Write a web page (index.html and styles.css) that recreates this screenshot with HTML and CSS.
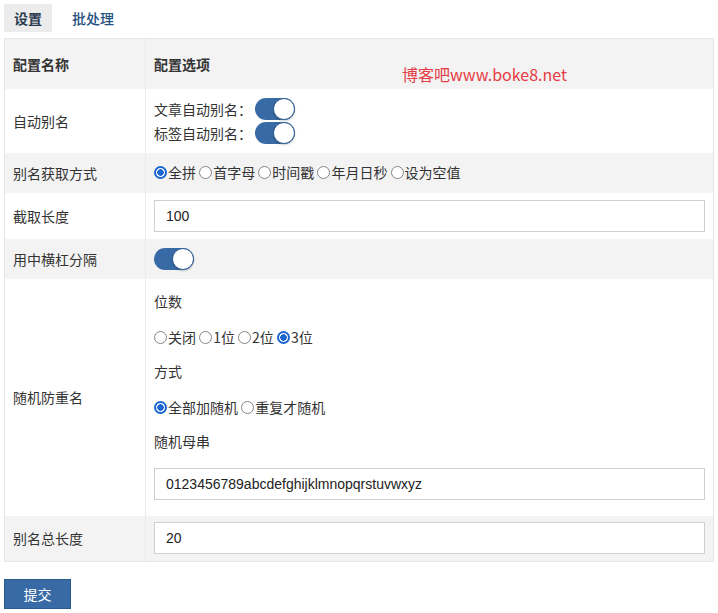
FILE: index.html
```html
<!DOCTYPE html>
<html lang="zh-CN">
<head>
<meta charset="utf-8">
<title>设置</title>
<link rel="stylesheet" href="styles.css">
</head>
<body>
<div class="page">
  <div class="tabs">
    <span class="tab active">设置</span>
    <span class="tab">批处理</span>
  </div>
  <div class="watermark">博客吧www.boke8.net</div>
  <table class="cfg">
    <tr class="head grey">
      <th class="c1">配置名称</th>
      <th class="c2">配置选项</th>
    </tr>
    <tr class="r-auto">
      <td class="c1">自动别名</td>
      <td class="c2">
        <div class="sw-line">文章自动别名：<span class="switch"><span class="knob"></span></span></div>
        <div class="sw-line">标签自动别名：<span class="switch"><span class="knob"></span></span></div>
      </td>
    </tr>
    <tr class="r40 grey">
      <td class="c1">别名获取方式</td>
      <td class="c2 radios">
        <label><span class="radio on"></span>全拼</label>
        <label><span class="radio"></span>首字母</label>
        <label><span class="radio"></span>时间戳</label>
        <label><span class="radio"></span>年月日秒</label>
        <label><span class="radio"></span>设为空值</label>
      </td>
    </tr>
    <tr class="r46">
      <td class="c1">截取长度</td>
      <td class="c2"><div class="input">100</div></td>
    </tr>
    <tr class="r40 grey">
      <td class="c1">用中横杠分隔</td>
      <td class="c2"><span class="switch"><span class="knob"></span></span></td>
    </tr>
    <tr class="r-rand">
      <td class="c1">随机防重名</td>
      <td class="c2 rand">
        <div class="sub">位数</div>
        <div class="sub radios">
          <label><span class="radio"></span>关闭</label>
          <label><span class="radio"></span>1位</label>
          <label><span class="radio"></span>2位</label>
          <label><span class="radio on"></span>3位</label>
        </div>
        <div class="sub">方式</div>
        <div class="sub radios">
          <label><span class="radio on"></span>全部加随机</label>
          <label><span class="radio"></span>重复才随机</label>
        </div>
        <div class="sub">随机母串</div>
        <div class="input">0123456789abcdefghijklmnopqrstuvwxyz</div>
      </td>
    </tr>
    <tr class="r46 grey">
      <td class="c1">别名总长度</td>
      <td class="c2"><div class="input">20</div></td>
    </tr>
  </table>
  <button class="submit">提交</button>
</div>
</body>
</html>
```
FILE: styles.css
```css
* { box-sizing: border-box; }
body {
  margin: 0;
  background: #fff;
  font-family: "Noto Sans CJK SC", "Noto Sans", sans-serif;
  font-size: 14px;
  color: #333;
}
.page {
  position: relative;
  padding: 4px 4px 0 4px;
}
.tabs {
  display: flex;
  height: 28px;
  align-items: stretch;
  margin-bottom: 6px;
}
.tab {
  display: flex;
  align-items: center;
  padding: 0 10px;
  color: #24517f;
  font-weight: 500;
  margin-right: 10px;
}
.tab.active {
  background: #ececec;
  color: #2a3a4f;
  font-weight: 700;
}
.watermark {
  position: absolute;
  left: 402px;
  top: 62px;
  font-size: 16px;
  color: #e53c45;
  font-family: "Noto Sans CJK SC", "Noto Sans", sans-serif;
}
.cfg {
  width: 710px;
  border-collapse: collapse;
  border: 1px solid #e6e6e6;
}
.cfg th, .cfg td {
  padding: 0 8px;
  text-align: left;
  vertical-align: middle;
}
.cfg .c1 {
  width: 141px;
  border-right: 1px solid #ebebeb;
}
.cfg th { font-weight: 700; color: #333; }
.grey { background: #f3f3f3; }
.head { height: 50px; }
.r-auto { height: 64px; }
.r40 { height: 40px; }
.r46 { height: 46px; }
.r-rand { height: 237px; }
.sw-line {
  display: flex;
  align-items: center;
  height: 24px;
}
.sw-line .switch { margin-left: 3px; }
.switch {
  position: relative;
  display: inline-block;
  width: 40px;
  height: 22px;
  border-radius: 11px;
  background: #386aa5;
  vertical-align: middle;
}
.knob {
  position: absolute;
  right: 0;
  top: 0;
  width: 22px;
  height: 22px;
  border-radius: 50%;
  background: #fff;
  border: 1px solid #2f5d93;
  box-shadow: 0 1px 2px rgba(0,0,0,0.2);
}
.radios label {
  display: inline-flex;
  align-items: center;
}
.radio {
  display: inline-block;
  width: 13px;
  height: 13px;
  border-radius: 50%;
  border: 1.5px solid #858585;
  margin-right: 1px;
  background: #fff;
}
.radio.on {
  border: 2px solid #1a64d2;
  background: radial-gradient(circle, #1a64d2 0 3px, #fff 3.5px);
}
.cfg td.rand {
  vertical-align: top;
  padding-top: 5px;
  padding-bottom: 16px;
}
.sub {
  height: 35px;
  display: flex;
  align-items: center;
}
.sub.radios { display: block; line-height: 35px; }
.sub.radios label { vertical-align: middle; }
.rand .input { margin-top: 9px; }
.input {
  height: 32px;
  border: 1px solid #cfcfcf;
  background: #fff;
  display: flex;
  align-items: center;
  padding: 0 11px;
  font-size: 14px;
  color: #222;
  font-family: "Liberation Sans", "Noto Sans CJK SC", sans-serif;
}
.submit {
  margin-top: 17px;
  width: 67px;
  height: 30px;
  background: #386aa5;
  border: 1px solid #2d5a8e;
  color: #fff;
  font-family: "Noto Sans CJK SC", sans-serif;
  font-size: 14px;
  padding: 0;
}
```
